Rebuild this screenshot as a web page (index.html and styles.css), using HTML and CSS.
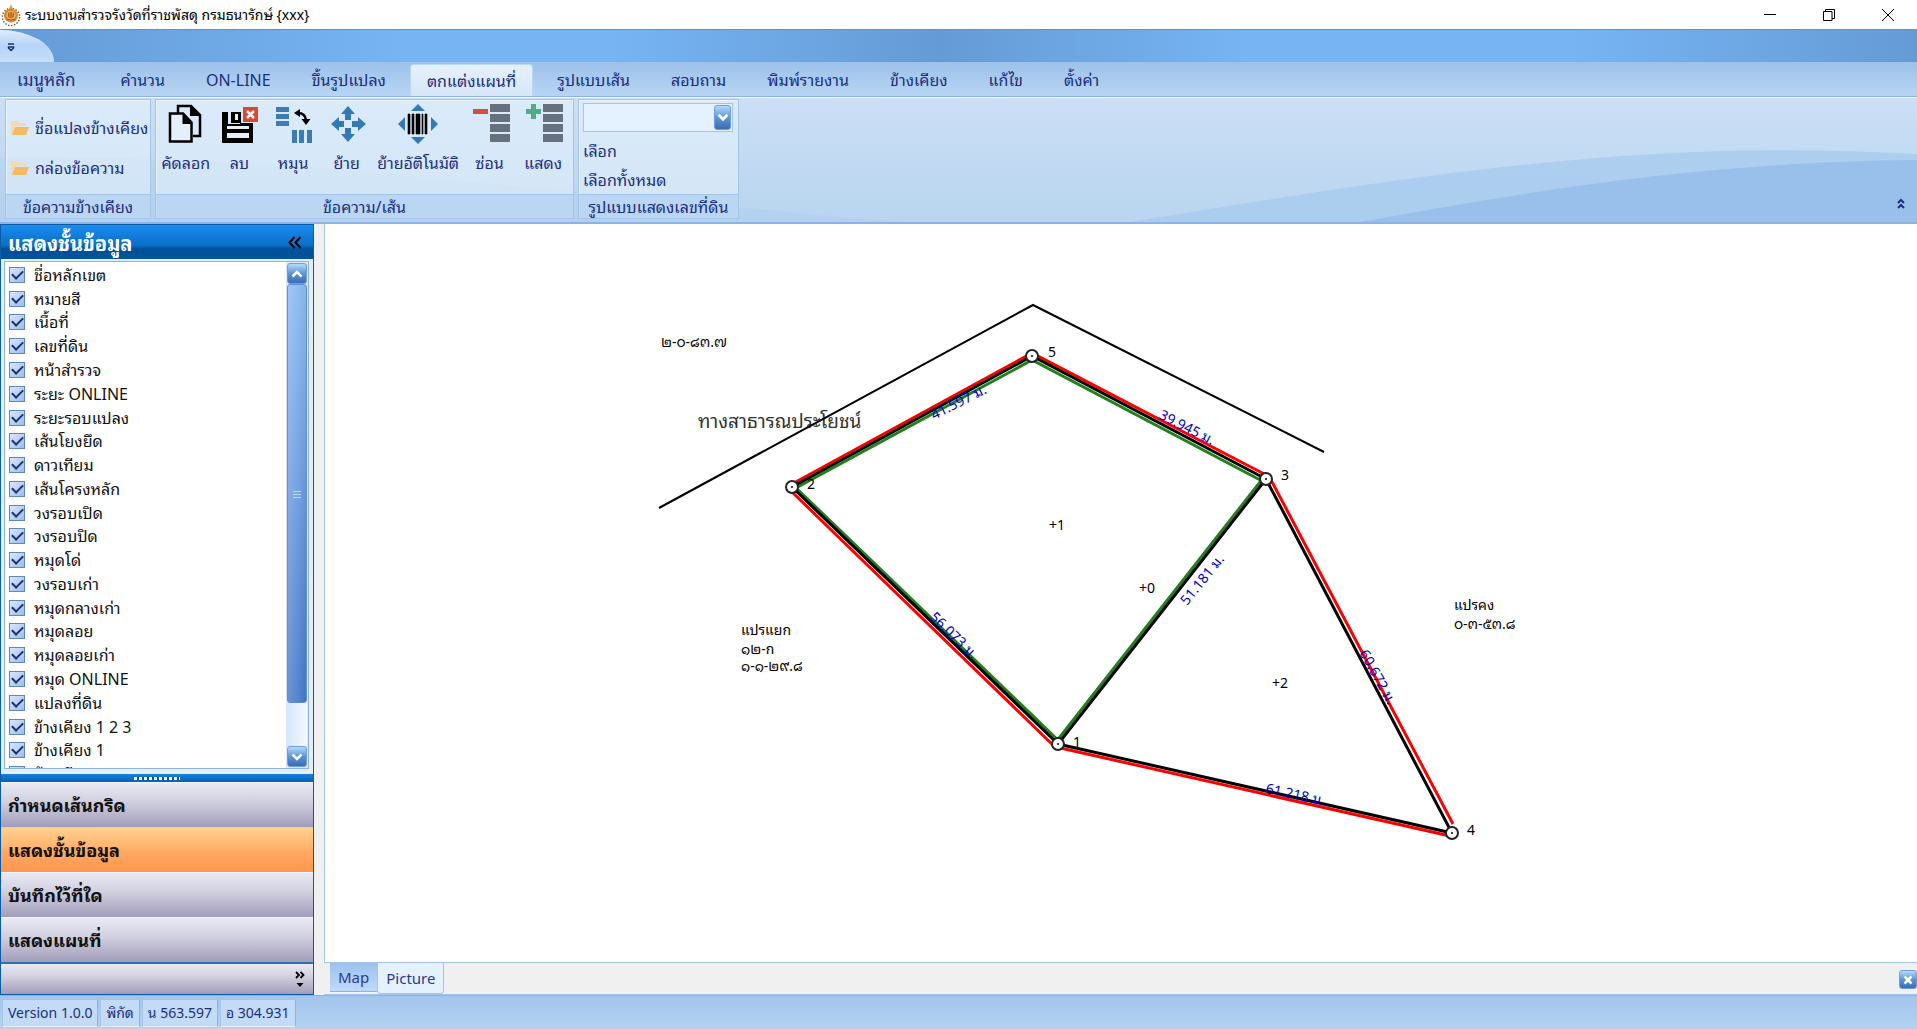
FILE: index.html
```html
<!DOCTYPE html>
<html lang="th">
<head>
<meta charset="utf-8">
<title>ระบบงานสำรวจรังวัดที่ราชพัสดุ กรมธนารักษ์</title>
<link rel="stylesheet" href="styles.css">
</head>
<body>
<header class="titlebar">
  <svg class="app-logo" viewBox="0 0 20 22" aria-hidden="true">
    <circle cx="10" cy="13" r="8.6" fill="none" stroke="#6b4a2a" stroke-width="1.4" stroke-dasharray="1.4 1.6"/>
    <circle cx="10" cy="11.5" r="7" fill="#d98a35"/>
    <path d="M10 0l2 5h-4z" fill="#e3a04a"/>
    <path d="M10 5v12M7 8l1.500 8M13 8l-1.500 8M5.500 15.500h9" stroke="#a85a18" fill="none"/>
    <circle cx="10" cy="11" r="4" fill="none" stroke="#f3bd72"/>
  </svg>
  <h1 class="title">ระบบงานสำรวจรังวัดที่ราชพัสดุ กรมธนารักษ์ {xxx}</h1>
  <div class="window-buttons">
    <button type="button" aria-label="Minimize"><svg viewBox="0 0 14 14"><path d="M1 6.500h12"/></svg></button>
    <button type="button" aria-label="Restore"><svg viewBox="0 0 14 14"><path d="M1.500 3.500h8.500v9h-8.500zM3.500 3.500v-2h9v9h-2.500"/></svg></button>
    <button type="button" aria-label="Close"><svg viewBox="0 0 14 14"><path d="M1 1l12 12M13 1l-12 12"/></svg></button>
  </div>
</header>

<div class="caption-strip">
  <button type="button" class="quick-access" aria-label="Quick access">
    <svg viewBox="0 0 8 9"><path d="M1 1h6M1.500 4v1l2.500 2.500l2.500 -2.500v-1z"/></svg>
  </button>
</div>

<nav class="tabs">
  <button type="button" class="tab tab-main">เมนูหลัก</button>
  <button type="button" class="tab">คำนวน</button>
  <button type="button" class="tab">ON-LINE</button>
  <button type="button" class="tab">ขึ้นรูปแปลง</button>
  <button type="button" class="tab selected">ตกแต่งแผนที่</button>
  <button type="button" class="tab">รูปแบบเส้น</button>
  <button type="button" class="tab">สอบถาม</button>
  <button type="button" class="tab">พิมพ์รายงาน</button>
  <button type="button" class="tab">ข้างเคียง</button>
  <button type="button" class="tab">แก้ไข</button>
  <button type="button" class="tab">ตั้งค่า</button>
</nav>

<section class="ribbon">
  <svg class="ribbon-wave" viewBox="0 0 1917 126" preserveAspectRatio="none" aria-hidden="true">
    <path d="M0 60C250 60 420 80 600 98C760 114 900 126 900 126H0z" fill="#a9cbef" opacity=".35"/>
    <path d="M1130 126C1350 90 1560 53 1780 53Q1850 53 1917 57V126z" fill="#a6c9ee" opacity=".75"/>
    <path d="M1360 126C1530 95 1700 65 1917 63V126z" fill="#93bbea" opacity=".75"/>
  </svg>

  <section class="group group-text">
    <div class="group-body folder-list">
      <button type="button" class="folder-button">
        <svg viewBox="0 0 18 16"><path d="M0 1h6l2 2h7v3h-11l-3 9h-1z" fill="#fad9a6"/><path d="M4 7h14l-3 8h-14z" fill="#f5b961"/></svg>
        ชื่อแปลงข้างเคียง
      </button>
      <button type="button" class="folder-button">
        <svg viewBox="0 0 18 16"><path d="M0 1h6l2 2h7v3h-11l-3 9h-1z" fill="#fad9a6"/><path d="M4 7h14l-3 8h-14z" fill="#f5b961"/></svg>
        กล่องข้อความ
      </button>
    </div>
    <h2 class="group-title">ข้อความข้างเคียง</h2>
  </section>

  <section class="group group-tools">
    <div class="group-body tool-list">
      <button type="button" class="tool">
        <svg viewBox="0 0 40 40"><path d="M12 9v-7h13l9 9v21h-7" fill="none" stroke="#000" stroke-width="2.500"/><path d="M24 2v10h10z" fill="#000"/><path d="M4 9.500h13l8.500 9v19h-21.500z" fill="#e3effa" stroke="#000" stroke-width="2.500"/><path d="M16.500 9v11h10z" fill="#000"/></svg>
        คัดลอก
      </button>
      <button type="button" class="tool">
        <svg viewBox="0 0 40 40"><path d="M3 8h6v12h12v-1h13v20h-31z" fill="#000"/><path d="M12 8h10v11h-10z" fill="#000"/><path d="M16 10h3v6h-3zM8 22h22v3h-22zM8 29h22v5h-22z" fill="#e3effa"/><path d="M24 3h15v15h-15z" fill="#d9492f"/><path d="M28 7l7 7M35 7l-7 7" stroke="#fff" stroke-width="2.500"/></svg>
        ลบ
      </button>
      <button type="button" class="tool">
        <svg viewBox="0 0 40 40"><path d="M3 3h13v5h-13zM3 10h13v5h-13zM3 17h13v5h-13zM19 26h5v13h-5zM26 26h5v13h-5zM34 26h5v13h-5z" fill="#3d7cb3"/><path d="M25 9q7 0 8 7" fill="none" stroke="#000" stroke-width="2.500"/><path d="M21 9l6-4v8zM28.500 15h9l-4.500 6z" fill="#000"/></svg>
        หมุน
      </button>
      <button type="button" class="tool">
        <svg viewBox="0 0 40 40" fill="#3379b5"><path d="M21 2l7 8h-4v6h-6v-6h-4zM21 38l7-8h-4v-6h-6v6h-4zM4 20l8-7v4h5v6h-5v4zM39 20l-8-7v4h-6v6h6v4z"/></svg>
        ย้าย
      </button>
      <button type="button" class="tool tool-wide">
        <svg viewBox="0 0 40 40"><path d="M20 0l7 7h-14zM20 40l7-7h-14zM0 20l7-7v14zM40 20l-7-7v14z" fill="#3379b5"/><path d="M10 10h2v20h-2zM14 10h2v20h-2zM18 10h4v20h-4zM24 10h1v20h-1zM27 10h2v20h-2z" fill="#000" stroke="#000" stroke-width=".6"/></svg>
        ย้ายอัติโนมัติ
      </button>
      <button type="button" class="tool">
        <svg viewBox="0 0 40 40"><path d="M3 5h15v5h-15z" fill="#d04f3d"/><path d="M20 0h20v8h-20zM20 10h20v8h-20zM20 20h20v8h-20zM20 30h20v8h-20z" fill="#67717d"/></svg>
        ซ่อน
      </button>
      <button type="button" class="tool">
        <svg viewBox="0 0 40 40"><path d="M8 0h5v5h5v5h-5v5h-5v-5h-5v-5h5z" fill="#4caf82"/><path d="M20 0h20v8h-20zM20 10h20v8h-20zM20 20h20v8h-20zM20 30h20v8h-20z" fill="#67717d"/></svg>
        แสดง
      </button>
    </div>
    <h2 class="group-title">ข้อความ/เส้น</h2>
  </section>

  <section class="group group-style">
    <div class="group-body style-list">
      <div class="combo">
        <select aria-label="รูปแบบแสดงเลขที่ดิน"><option></option></select>
        <span class="combo-arrow"><svg viewBox="0 0 10 8"><path d="M1 1.500l4 4l4-4"/></svg></span>
      </div>
      <button type="button" class="text-button">เลือก</button>
      <button type="button" class="text-button">เลือกทั้งหมด</button>
    </div>
    <h2 class="group-title">รูปแบบแสดงเลขที่ดิน</h2>
  </section>

  <button type="button" class="collapse-ribbon" aria-label="Collapse ribbon">
    <svg viewBox="0 0 8 11"><path d="M1 5l3-3l3 3M1 10l3-3l3 3"/></svg>
  </button>
</section>

<main class="workspace">
  <aside class="sidebar">
    <header class="side-header">
      <h2>แสดงชั้นข้อมูล</h2>
      <button type="button" aria-label="Collapse panel"><svg viewBox="0 0 14 13"><path d="M6.500 1l-5 5.500l5 5.500M12.500 1l-5 5.500l5 5.500"/></svg></button>
    </header>
    <div class="layer-panel">
      <div class="layer-box">
        <ul class="layers">
          <li><label><input type="checkbox" checked>ชื่อหลักเขต</label></li>
          <li><label><input type="checkbox" checked>หมายสี</label></li>
          <li><label><input type="checkbox" checked>เนื้อที่</label></li>
          <li><label><input type="checkbox" checked>เลขที่ดิน</label></li>
          <li><label><input type="checkbox" checked>หน้าสำรวจ</label></li>
          <li><label><input type="checkbox" checked>ระยะ ONLINE</label></li>
          <li><label><input type="checkbox" checked>ระยะรอบแปลง</label></li>
          <li><label><input type="checkbox" checked>เส้นโยงยึด</label></li>
          <li><label><input type="checkbox" checked>ดาวเทียม</label></li>
          <li><label><input type="checkbox" checked>เส้นโครงหลัก</label></li>
          <li><label><input type="checkbox" checked>วงรอบเปิด</label></li>
          <li><label><input type="checkbox" checked>วงรอบปิด</label></li>
          <li><label><input type="checkbox" checked>หมุดโด่</label></li>
          <li><label><input type="checkbox" checked>วงรอบเก่า</label></li>
          <li><label><input type="checkbox" checked>หมุดกลางเก่า</label></li>
          <li><label><input type="checkbox" checked>หมุดลอย</label></li>
          <li><label><input type="checkbox" checked>หมุดลอยเก่า</label></li>
          <li><label><input type="checkbox" checked>หมุด ONLINE</label></li>
          <li><label><input type="checkbox" checked>แปลงที่ดิน</label></li>
          <li><label><input type="checkbox" checked>ข้างเคียง 1 2 3</label></li>
          <li><label><input type="checkbox" checked>ข้างเคียง 1</label></li>
          <li><label><input type="checkbox" checked>ข้างเคียง 2</label></li>
        </ul>
        <div class="scrollbar">
          <button type="button" aria-label="Scroll up"><svg viewBox="0 0 12 8"><path d="M1.500 6.500l4.500-4.500l4.500 4.500"/></svg></button>
          <div class="track"><div class="thumb"><svg viewBox="0 0 8 8"><path d="M0 1.500h8M0 4.500h8M0 7.500h8"/></svg></div></div>
          <button type="button" aria-label="Scroll down"><svg viewBox="0 0 12 8"><path d="M1.500 1.500l4.500 4.500l4.500-4.500"/></svg></button>
        </div>
      </div>
    </div>
    <div class="splitter"><span></span></div>
    <nav class="side-nav">
      <button type="button">กำหนดเส้นกริด</button>
      <button type="button" class="active">แสดงชั้นข้อมูล</button>
      <button type="button">บันทึกไว้ที่ใด</button>
      <button type="button">แสดงแผนที่</button>
    </nav>
    <div class="side-overflow">
      <button type="button" aria-label="More panels"><svg viewBox="0 0 10 16"><path d="M1 1l3 3l-3 3M5.500 1l3 3l-3 3" fill="none" stroke="#000" stroke-width="1.800"/><path d="M1.500 12h7l-3.500 4z"/></svg></button>
    </div>
  </aside>

  <section class="document">
    <div class="canvas">
      <svg class="map" viewBox="325 224 1592 737" preserveAspectRatio="xMinYMin meet" role="img" aria-label="แผนที่แปลงที่ดิน">
        <text class="road" x="698" y="428">ทางสาธารณประโยชน์</text>
        <path class="outline" d="M659 508L1033 305L1324 452"/>
        <g class="inner">
          <path d="M794 489L1032 360L1264 482M794 486L1060 742M1264 477L1056 742"/>
        </g>
        <g class="outer">
          <path d="M792 484L1032 353L1268 476M1271 480L1453 824M1056 747L1450 836M790 490L1056 748"/>
        </g>
        <g class="boundary">
          <path d="M792 487L1032 356L1266 479L1452 833L1058 744L1266 479M792 487L1058 744"/>
        </g>
        <g class="length">
          <text transform="translate(934 420) rotate(-27)">41.597 ม.</text>
          <text transform="translate(1158 418) rotate(27)">39.945 ม.</text>
          <text transform="translate(929 618) rotate(44)">56.073 ม.</text>
          <text transform="translate(1187 606) rotate(-51)">51.181 ม.</text>
          <text transform="translate(1359 653) rotate(61)">60.672 ม.</text>
          <text transform="translate(1265 793) rotate(12)">61.218 ม.</text>
        </g>
        <g class="station">
          <circle cx="792" cy="487" r="6"/><circle cx="1032" cy="356" r="6"/><circle cx="1266" cy="479" r="6"/><circle cx="1452" cy="833" r="6"/><circle cx="1058" cy="744" r="6"/>
        </g>
        <g class="dot">
          <circle cx="792" cy="487" r="1"/><circle cx="1032" cy="356" r="1"/><circle cx="1266" cy="479" r="1"/><circle cx="1452" cy="833" r="1"/><circle cx="1058" cy="744" r="1"/>
        </g>
        <g class="number">
          <text x="1073" y="747">1</text><text x="807" y="489">2</text><text x="1281" y="480">3</text><text x="1467" y="835">4</text><text x="1048" y="357">5</text>
          <text x="1139" y="593">+0</text><text x="1049" y="530">+1</text><text x="1272" y="688">+2</text>
        </g>
        <g class="parcel">
          <text x="661" y="347">๒-๐-๘๓.๗</text>
          <text x="741" y="635">แปรแยก</text><text x="741" y="654">๑๒-ก</text><text x="741" y="671">๑-๑-๒๙.๘</text>
          <text x="1454" y="610">แปรคง</text><text x="1454" y="629">๐-๓-๕๓.๘</text>
        </g>
      </svg>
    </div>
    <div class="doc-tabs">
      <button type="button" class="doc-tab">Map</button>
      <button type="button" class="doc-tab current">Picture</button>
      <button type="button" class="doc-close" aria-label="Close document"><svg viewBox="0 0 10 10"><path d="M1.500 1.500l7 7M8.500 1.500l-7 7"/></svg></button>
    </div>
  </section>
</main>

<footer class="statusbar">
  <span>Version 1.0.0</span>
  <span>พิกัด</span>
  <span>น 563.597</span>
  <span>อ 304.931</span>
</footer>
</body>
</html>
```
FILE: styles.css
```css
* { box-sizing: border-box; }

body {
  margin: 0;
  min-height: 100vh;
  display: flex;
  flex-direction: column;
  background: #f0f0f0;
  color: #1c2f7c;
  font: 16px/20px "Noto Sans", "Noto Sans Thai Looped", "Loma", "Waree", "Noto Sans Thai", sans-serif;
}

button {
  margin: 0;
  padding: 0;
  border: 0;
  background: none;
  color: inherit;
  font: inherit;
}

h1, h2 { margin: 0; font: inherit; }
svg { display: block; }

/* Window title */
.titlebar {
  height: 29px;
  display: flex;
  align-items: center;
  gap: 4px;
  background: #fff;
  color: #000;
}
.app-logo { width: 20px; height: 22px; margin-left: 1px; }
.title { flex: 1; font-size: 14px; white-space: nowrap; }
.window-buttons { display: flex; }
.window-buttons button { width: 59px; height: 28px; display: grid; place-items: center; }
.window-buttons svg { width: 14px; height: 14px; fill: none; stroke: #000; }

.caption-strip {
  height: 33px;
  background: linear-gradient(90deg, #659bd5, #76b4f4 21%, #76b4f4 32%, #659bd5 49%, #76b4f4 65%, #76b4f4 82%, #659bd5);
  border-top: 1px solid #5b93c9;
}
.quick-access {
  width: 54px;
  height: 32px;
  display: block;
  padding: 12px 7px;
  border-top-right-radius: 54px 32px;
  background: linear-gradient(#d9e9fd, #b5d4f8 50%, #c5e0fb);
  border-top: 1px solid #e8f3ff;
}
.quick-access svg { width: 8px; height: 9px; fill: none; stroke: #1c2f7c; stroke-width: 1.5; }

/* Ribbon tabs */
.tabs {
  height: 35px;
  display: flex;
  align-items: flex-end;
  gap: 7px;
  background: linear-gradient(#9dc1eb, #b8d5f3);
  border-bottom: 1px solid #8db2e3;
}
.tab { height: 32px; padding: 0 17px; white-space: nowrap; }
.tab-main { font-size: 17px; padding-right: 21px; }
.tab.selected {
  border: 1px solid #b9d8fb;
  border-bottom: 0;
  border-radius: 4px 4px 0 0;
  background: linear-gradient(#e6f1fd, #d6e6f8);
  padding: 0 16px;
}

/* Ribbon */
.ribbon {
  position: relative;
  height: 127px;
  display: flex;
  gap: 4px;
  padding: 1px 6px 3px 5px;
  background: linear-gradient(#cbdff6, #b9d5ef);
  border-top: 1px solid #f2f8ff;
  border-bottom: 2px solid #8db2e3;
}
.ribbon-wave { position: absolute; inset: 0; width: 100%; height: 100%; }
.group {
  position: relative;
  display: flex;
  flex-direction: column;
  border: 1px solid #a4c5ea;
  box-shadow: inset 1px 1px #e9f3fd;
  background: rgba(228, 241, 252, .6);
}
.group-text { width: 146px; }
.group-tools { width: 419px; }
.group-style { width: 161px; }
.group-body { flex: 1; min-height: 0; }
.group-title {
  height: 24px;
  line-height: 24px;
  text-align: center;
  background: rgba(170, 203, 238, .6);
  border-top: 1px solid #a4c5ea;
  white-space: nowrap;
}
.folder-list { display: flex; flex-direction: column; gap: 20px; padding: 18px 0 0 5px; }
.folder-button { display: flex; align-items: center; gap: 6px; white-space: nowrap; }
.folder-button svg { width: 18px; height: 16px; flex: none; }
.tool-list { display: flex; padding: 4px 3px 0; }
.tool {
  width: 54px;
  display: flex;
  flex-direction: column;
  align-items: center;
  gap: 9px;
  white-space: nowrap;
}
.tool-wide { width: 90px; }
.tool svg { width: 40px; height: 40px; }
.style-list { display: flex; flex-direction: column; align-items: flex-start; gap: 9px; padding: 3px 4px 0; }
.combo { position: relative; width: 150px; height: 29px; }
.combo select {
  appearance: none;
  width: 100%;
  height: 100%;
  border: 1px solid #a4c5ea;
  border-radius: 0;
  background: #e4f1fe;
}
.combo-arrow, .scrollbar button, .doc-close {
  display: grid;
  place-items: center;
  border: 1px solid #6f9fdb;
  border-radius: 3px;
  background: linear-gradient(#b7d8f8, #5a96d8 50%, #3f6bb4);
}
.combo-arrow { position: absolute; top: 2px; right: 2px; width: 17px; height: 25px; pointer-events: none; }
.combo-arrow svg { width: 12px; height: 9px; }
.combo-arrow svg, .scrollbar button svg, .doc-close svg { fill: none; stroke: #fff; stroke-width: 2.5; }
.collapse-ribbon { position: absolute; right: 12px; bottom: 13px; }
.collapse-ribbon svg { width: 8px; height: 11px; fill: none; stroke: #1c2f7c; stroke-width: 2; }

/* Workspace */
.workspace { flex: 1; display: flex; gap: 10px; min-height: 0; }
.sidebar {
  width: 314px;
  display: flex;
  flex-direction: column;
  border: 1px solid #0a5aa5;
  color: #111;
}
.side-header {
  height: 34px;
  display: flex;
  justify-content: space-between;
  align-items: center;
  padding: 0 11px 0 7px;
  background: linear-gradient(#1a8cf0, #0a6fc8 60%, #00509a 70%, #00539c);
  color: #fff;
}
.side-header h2 { font-size: 20px; line-height: 24px; padding-top: 3px; font-weight: 700; }
.side-header svg { width: 14px; height: 13px; fill: none; stroke: #000; stroke-width: 2; }
.layer-panel { flex: 1; min-height: 0; display: flex; padding: 2px 4px 4px 3px; background: #e3effb; }
.layer-box { flex: 1; display: flex; border: 1px solid #8db2e3; background: #fff; overflow: hidden; height: 508px; }
.layers {
  flex: 1;
  display: grid;
  grid-auto-rows: 1fr;
  height: 524px;
  margin: 0;
  padding: 1px 0 0 4px;
  list-style: none;
}
.layers label { display: flex; align-items: center; gap: 9px; height: 100%; }
.layers input {
  appearance: none;
  display: grid;
  place-items: center;
  width: 16px;
  height: 16px;
  margin: 0;
  border: 1px solid #5f86bf;
  background: linear-gradient(135deg, #dbe6fa, #9dbcf0);
}
.layers input:checked::after {
  content: "";
  width: 9px;
  height: 5px;
  margin-top: -3px;
  border: solid #16306f;
  border-width: 0 0 2px 2px;
  transform: rotate(-45deg);
}
.scrollbar { width: 22px; display: flex; flex-direction: column; padding: 1px; background: #dbe9fb; }
.scrollbar button { height: 21px; flex: none; }
.scrollbar button svg { width: 12px; height: 8px; }
.track { flex: 1; padding-bottom: 43px; background: linear-gradient(90deg, #d5e6fb, #f4f9ff); }
.thumb {
  height: 100%;
  display: grid;
  place-items: center;
  border: 1px solid #5b8fd6;
  border-radius: 3px;
  background: linear-gradient(rgba(160, 200, 248, .7), rgba(58, 98, 180, .5)), linear-gradient(90deg, #9cc6f5, #6ea2e2 60%, #4d82cd);
}
.thumb svg { width: 8px; height: 8px; stroke: #c0dcfa; }
.splitter {
  height: 8px;
  display: grid;
  place-items: center;
  background: linear-gradient(#1580dd, #0562b4);
}
.splitter span { width: 46px; height: 3px; background: repeating-linear-gradient(90deg, #fff 0 3px, #0a559f 3px 5px); }
.side-nav button, .side-overflow {
  display: block;
  width: 100%;
  background: linear-gradient(#eaeaf5, #cfcede 45%, #c6c4d6 55%, #a19dbc);
}
.side-nav button {
  height: 45px;
  padding: 0 7px;
  text-align: left;
  font-size: 18px;
  font-weight: 700;
  border-top: 1px solid #f4f4fa;
}
.side-nav .active { background: linear-gradient(#ffd18f, #ffb26c 45%, #ffa861 55%, #ff9650); border-top-color: #ffca80; }
.side-overflow { height: 32px; display: flex; justify-content: flex-end; padding: 4px 8px; border-top: 2px solid #2f6fae; }
.side-overflow svg { width: 10px; height: 16px; }

/* Drawing area */
.document { flex: 1; min-width: 0; display: flex; flex-direction: column; }
.canvas { flex: 1; min-height: 0; background: #fff; border: 1px solid #a4c5ea; border-width: 0 0 1px 1px; }
.map { width: 100%; height: auto; overflow: hidden; }
.map path { fill: none; }
.outline { stroke: #000; stroke-width: 2; }
.inner path { stroke: #22801c; stroke-width: 3; }
.outer path { stroke: #f00; stroke-width: 3; }
.boundary path { stroke: #000; stroke-width: 3; }
.station circle { fill: #fff; stroke: #222; stroke-width: 2; }
.road { font-size: 19px; fill: #333; }
.number { font-size: 14px; fill: #000; }
.parcel { font-size: 14px; fill: #000; }
.length { font-size: 14px; fill: #00c; }

.doc-tabs { height: 32px; display: flex; align-items: flex-start; padding-left: 6px; border-bottom: 1px solid #a4c5ea; font-size: 15px; }
.doc-tab { height: 29px; padding: 0 8px; background: linear-gradient(#9dc1ee, #c0dafa); border-bottom: 1px solid #8db2e3; color: #2c3a92; }
.doc-tab.current {
  height: 31px;
  background: #e4f1fe;
  border: 1px solid #a4c5ea;
  border-top: 0;
  border-radius: 0 0 4px 4px;
}
.doc-close { width: 18px; height: 19px; margin: 7px 0 0 auto; }
.doc-close svg { width: 10px; height: 10px; }

/* Status bar */
.statusbar {
  height: 34px;
  display: flex;
  gap: 2px;
  padding: 3px 2px 2px;
  border-top: 1px solid #8db2e3;
  background: linear-gradient(#a3c4ec, #b4d3f3);
  font-size: 14px;
  white-space: nowrap;
}
.statusbar span {
  padding: 0 5px;
  line-height: 26px;
  border: 1px solid #a4c5ea;
  border-color: #a4c5ea #8db2e3 #e4f1fe #a4c5ea;
  background: #c3dbf6;
}
```
